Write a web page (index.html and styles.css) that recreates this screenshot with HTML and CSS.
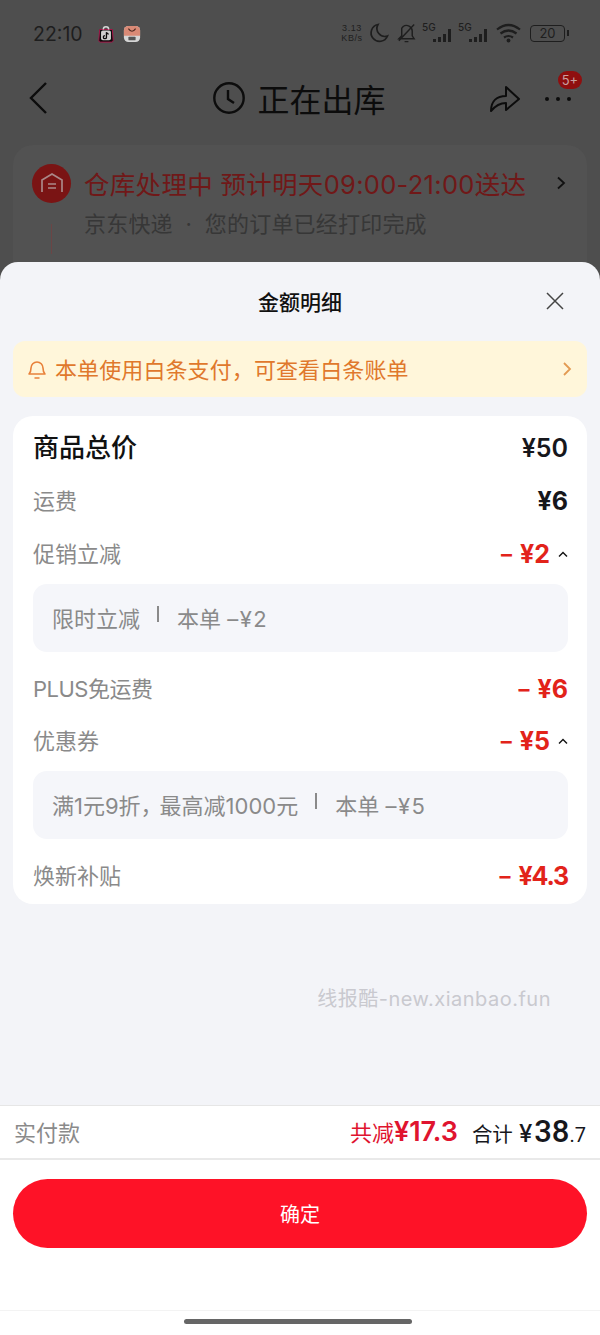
FILE: index.html
```html
<!DOCTYPE html>
<html lang="zh-CN">
<head>
<meta charset="utf-8">
<title>金额明细</title>
<meta name="viewport" content="width=device-width,initial-scale=1">
<link rel="stylesheet" href="styles.css">
</head>
<body>
<div class="screen">

<!-- dimmed order page behind the sheet -->
<div class="behind">
  <div class="status-bar">
    <div class="status-left">
      <span class="clock">22:10</span>
      <svg class="app-icon" width="18" height="18" viewBox="0 0 20 20">
        <path d="M3 5h14l1 12a2 2 0 0 1-2 2H4a2 2 0 0 1-2-2z" fill="#0b0b0b" stroke="#b0124a" stroke-width="1"/>
        <path d="M7 5a3 3 0 0 1 6 0" fill="none" stroke="#d8d8d8" stroke-width="1.6"/>
        <rect x="4.500" y="6" width="11" height="11" rx="2" fill="#cfcfcf"/>
        <path d="M10.500 8v5.500a1.700 1.700 0 1 1-1.700-1.700M10.500 8c.3 1.300 1.200 2 2.500 2.200" fill="none" stroke="#0b0b0b" stroke-width="1.500"/>
      </svg>
      <svg class="app-icon" width="18" height="18" viewBox="0 0 20 20">
        <rect x="1" y="1" width="18" height="18" rx="5" fill="#d6d6d6"/>
        <path d="M1 12V6a5 5 0 0 1 5-5h8a5 5 0 0 1 5 5v6z" fill="#d98a76"/>
        <path d="M6 4q4 6 8 0" fill="none" stroke="#4d2a22" stroke-width="1.200"/>
        <rect x="6" y="13" width="8" height="4" rx="1" fill="#555"/>
      </svg>
    </div>
    <div class="status-right">
      <span class="net-speed">3.13<br>KB/s</span>
      <svg class="moon" width="20" height="20" viewBox="0 0 20 20"><path d="M9 1.500a8.500 8.500 0 1 0 9.500 11.500A8 8 0 0 1 9 1.500z" fill="none" stroke="#1e1e1e" stroke-width="1.700"/></svg>
      <svg class="bell-off" width="21" height="22" viewBox="0 0 22 22"><path d="M3 17h16l-2-3V9a6 6 0 0 0-9.500-4.800L6 6v8zM9 20h4M3 19L19 2" fill="none" stroke="#1e1e1e" stroke-width="1.500"/></svg>
      <span class="sim"><b>5G</b><svg width="20" height="14" viewBox="0 0 20 14"><path d="M0 10h3v3H0zM5 8h3v5H5zM10 5h3v8h-3zM15 0h3v13h-3z" fill="#1e1e1e"/></svg></span>
      <span class="sim"><b>5G</b><svg width="20" height="14" viewBox="0 0 20 14"><path d="M0 10h3v3H0zM5 8h3v5H5zM10 5h3v8h-3zM15 0h3v13h-3z" fill="#1e1e1e"/></svg></span>
      <svg class="wifi" width="27" height="20" viewBox="0 0 27 20"><path d="M1 6.500q11.500-9 23 0M4.500 10.500q8-6 16 0M8 14.500q4.500-3 9 0" fill="none" stroke="#1e1e1e" stroke-width="2.200"/><circle cx="12.500" cy="17.500" r="1.900" fill="#1e1e1e"/></svg>
      <span class="battery">20</span>
    </div>
  </div>
  <div class="nav">
    <svg class="nav-back" width="20" height="34" viewBox="0 0 20 34"><path d="M18 2L3 17l15 15" fill="none" stroke="#0c0c0c" stroke-width="2.400"/></svg>
    <div class="nav-title">
      <svg width="34" height="34" viewBox="0 0 34 34"><circle cx="17" cy="17" r="14.700" fill="none" stroke="#0c0c0c" stroke-width="2.400"/><path d="M16 9v9l6 4" fill="none" stroke="#0c0c0c" stroke-width="2.400"/></svg>
      <span>正在出库</span>
    </div>
    <div class="nav-actions">
      <svg width="34" height="30" viewBox="0 0 34 30"><path d="M4 28c0-10 6-15 15-15V4l13 12-13 11v-7c-6 0-10 2-15 8z" fill="none" stroke="#0c0c0c" stroke-width="2" stroke-linejoin="round"/></svg>
      <div class="more">
        <i></i><i></i><i></i>
        <span class="more-badge">5+</span>
      </div>
    </div>
  </div>
  <div class="order-card">
    <div class="order-head">
      <span class="order-icon">
        <svg width="24" height="22" viewBox="0 0 24 22"><path d="M2 20V8l10-6 10 6v12M8 12h8M8 16h8" fill="none" stroke="#a88" stroke-width="1.700"/></svg>
      </span>
      <span class="order-title">仓库处理中 预计明天09:00-21:00送达</span>
      <svg width="10" height="14" viewBox="0 0 10 14"><path d="M2 1.500L8 7l-6 5.500" fill="none" stroke="#111" stroke-width="1.800"/></svg>
    </div>
    <div class="order-sub">京东快递<span class="dot">·</span>您的订单已经打印完成</div>
    <div class="order-tail"></div>
  </div>
</div>

<!-- bottom sheet -->
<div class="sheet">
  <div class="sheet-head">
    <h1>金额明细</h1>
    <svg class="sheet-close" width="18" height="18" viewBox="0 0 18 18"><path d="M1 1l16 16M17 1L1 17" stroke="#444" stroke-width="1.500"/></svg>
  </div>

  <div class="notice">
    <svg width="20" height="22" viewBox="0 0 20 22"><path d="M2 16c1.500-1.500 2-3 2-6a6 6 0 0 1 12 0c0 3 .5 4.500 2 6zM7.500 20h5" fill="none" stroke="#e8813a" stroke-width="1.600" stroke-linejoin="round"/></svg>
    <span class="notice-text">本单使用白条支付，可查看白条账单</span>
    <svg width="10" height="16" viewBox="0 0 10 16"><path d="M2 2l6 6-6 6" fill="none" stroke="#e39a52" stroke-width="1.800"/></svg>
  </div>

  <div class="card">
    <div class="row row-total">
      <span class="row-name">商品总价</span>
      <span class="amount">¥50</span>
    </div>
    <div class="row">
      <span class="row-name">运费</span>
      <span class="amount">¥6</span>
    </div>
    <div class="row">
      <span class="row-name">促销立减</span>
      <span class="amount red"><span class="minus">–</span>¥2<svg class="caret" width="10" height="7" viewBox="0 0 10 7"><path d="M1 5.500L5 1.500l4 4" fill="none" stroke="#111" stroke-width="1.400"/></svg></span>
    </div>
    <div class="detail">
      <span>限时立减</span><i class="sep"></i><span>本单 <span class="off">–¥2</span></span>
    </div>
    <div class="row row-plus">
      <span class="row-name">PLUS免运费</span>
      <span class="amount red"><span class="minus">–</span>¥6</span>
    </div>
    <div class="row row-coupon">
      <span class="row-name">优惠券</span>
      <span class="amount red"><span class="minus">–</span>¥5<svg class="caret" width="10" height="7" viewBox="0 0 10 7"><path d="M1 5.500L5 1.500l4 4" fill="none" stroke="#111" stroke-width="1.400"/></svg></span>
    </div>
    <div class="detail">
      <span>满1元9折<span class="comma">，</span>最高减1000元</span><i class="sep"></i><span>本单 <span class="off">–¥5</span></span>
    </div>
    <div class="row row-last">
      <span class="row-name">焕新补贴</span>
      <span class="amount red"><span class="minus">–</span><span class="tight">¥4.3</span></span>
    </div>
  </div>

  <div class="watermark">线报酷-new.xianbao.fun</div>

  <div class="summary">
    <span class="summary-label">实付款</span>
    <span class="saved">共减<b>¥17.3</b></span>
    <span class="sum">合计<em>¥</em><strong>38</strong><small>.7</small></span>
  </div>
  <div class="actions">
    <button type="button">确定</button>
  </div>
  <div class="home-bar"><i></i></div>
</div>

</div>
</body>
</html>
```

FILE: styles.css
```css
*{box-sizing:border-box}
html,body{margin:0;padding:0}
body{font-family:Inter,"Noto Sans CJK SC",sans-serif;background:#4e4e4e;color:#111}
.screen{width:600px;height:1335px;display:flex;flex-direction:column;overflow:hidden}

/* page behind the sheet */
.behind{height:262px;flex:none;background:#4e4e4e;overflow:hidden}
.status-bar{height:68px;padding:20px 0 0 33px;display:flex;justify-content:space-between;align-items:flex-start;color:#1e1e1e}
.status-left{display:flex;align-items:center;gap:8px;height:28px}
.clock{font-size:19.500px;margin-right:6px}
.status-right{display:flex;align-items:center;height:28px;padding-right:35px;margin-top:-1px}
.net-speed{width:24px;font:9px/10.400px "Liberation Sans",sans-serif;letter-spacing:.6px;text-align:center;white-space:nowrap}
.moon{margin-left:5px}
.bell-off{margin-left:7px}
.sim{display:flex;align-items:flex-end;height:20px;position:relative;width:31px;justify-content:flex-end;margin-left:5px}
.sim b{position:absolute;left:0;top:-2px;font-size:10px;font-weight:500}
.wifi{margin-left:7px}
.battery{position:relative;width:35px;height:17px;margin-left:7px;border:1.500px solid #1e1e1e;border-radius:4px;font-size:13px;line-height:14px;text-align:center}
.battery::after{content:"";position:absolute;right:-5px;top:4px;width:2px;height:6px;background:#1e1e1e}
.nav{height:60px;display:flex;align-items:center;padding:0 20px 0 28px;justify-content:space-between}
.nav-title{display:flex;align-items:center;gap:11px;font-size:32px;color:#0c0c0c;margin-left:63px}
.nav-actions{display:flex;align-items:center;gap:24px}
.more{display:flex;gap:7px;position:relative;padding-right:9px;margin-top:2px}
.more i{width:4px;height:4px;border-radius:50%;background:#0c0c0c}
.more-badge{position:absolute;left:13px;top:-26px;width:24px;height:18px;border-radius:9px;background:#8f0f0f;color:#c9a0a0;font-size:13px;line-height:18px;text-align:center}
.order-card{margin:17px 13px 0;height:200px;padding:19px 21px 0 19px;background:#525252;border-radius:20px}
.order-head{display:flex;align-items:center;gap:13px;height:38px}
.order-icon{width:39px;height:39px;flex:none;border-radius:50%;background:#7a1414;display:flex;align-items:center;justify-content:center}
.order-title{flex:1;font-size:25.500px;letter-spacing:.3px;color:#701818;white-space:nowrap;margin-top:-2px}
.order-sub{margin:4px 0 0 52px;font-size:22px;letter-spacing:.2px;color:#373737;white-space:nowrap}
.dot{display:inline-block;width:32px;text-align:center}
.order-tail{width:1px;height:30px;margin:-14px 0 0 19px;background:#6b4545}

/* sheet */
.sheet{flex:1;background:#f3f4f8;border-radius:18px 18px 0 0;display:flex;flex-direction:column;min-height:0}
.sheet-head{height:79px;flex:none;position:relative;display:flex;align-items:center;justify-content:center;padding-bottom:2px}
.sheet-head h1{margin:0;font-size:21px;font-weight:500;color:#111}
.sheet-close{position:absolute;right:36px;top:30px}
.notice{margin:0 13px;height:56px;flex:none;padding:0 15px 0 14px;background:#fff6da;border-radius:12px;display:flex;align-items:center;gap:8px;color:#e0782c}
.notice-text{flex:1;font-size:22px;letter-spacing:.1px;margin-top:-2px}
.card{margin:19px 13px 0;padding:14px 19px 10px 20px;background:#fff;border-radius:20px;flex:none}
.row{height:36px;display:flex;align-items:center;justify-content:space-between;margin-top:17px}
.row-total{margin-top:0}
.row-name{font-size:22px;color:#8a8a8a;white-space:nowrap;margin-top:-4px}
.row-total .row-name{font-size:26px;font-weight:500;color:#111;margin-top:-6px}
.amount{font-size:25px;font-weight:700;color:#16171c;display:flex;align-items:center}
.row-total .amount{font-weight:600}
.red{color:#e2231a}
.minus{font-size:22px;margin-right:8px}
.tight{letter-spacing:-1.200px}
.caret{margin-left:8px}
.detail{height:68px;margin-top:12px;padding:0 20px 2px 19px;background:#f5f6fa;border-radius:14px;display:flex;align-items:center;font-size:22px;color:#8a8a8a;white-space:nowrap}
.off{letter-spacing:1.500px}
.comma{letter-spacing:-3px}
.sep{width:2px;height:16px;margin:-6px 18px 0 17px;background:#8a8a8a}
.row-plus{margin-top:19px}
.row-plus .row-name{letter-spacing:-.5px}
.row-coupon{margin-top:16px}
.row-last{margin-top:19px}
.watermark{margin:79px 49px 0 0;text-align:right;font-size:20px;color:#c9c9cf;letter-spacing:.5px;flex:none}
.summary{margin-top:93px;height:55px;flex:none;padding:0 14px;background:#fff;border-top:1px solid #e6e6e6;border-bottom:2px solid #e9e9e9;display:flex;align-items:center}
.summary-label{flex:1;font-size:22px;color:#8a8a8a;margin-top:-2px}
.saved{font-size:22px;color:#e0142f;margin-right:14px;margin-top:-2px}
.saved b{font-size:27px;font-weight:600}
.sum{font-size:20.500px;color:#16171c;display:flex;align-items:baseline;margin-top:-2px}
.sum em{font-style:normal;margin-left:6px;font-size:24px;font-weight:500}
.sum strong{font:500 31px Roboto,sans-serif;margin-left:2px}
.sum small{font:400 20px Roboto,sans-serif}
.actions{flex:1;background:#fff;padding:19px 13px 0}
.actions button{width:100%;height:69px;border:0;border-radius:35px;background:#fe1227;color:#fff;font:400 20px Inter,"Noto Sans CJK SC",sans-serif}
.home-bar{height:25px;flex:none;background:#fff;border-top:1px solid #f3f3f3;display:flex;justify-content:center;padding:8px 4px 0 0}
.home-bar i{width:228px;height:5px;border-radius:3px;background:#666}
```
